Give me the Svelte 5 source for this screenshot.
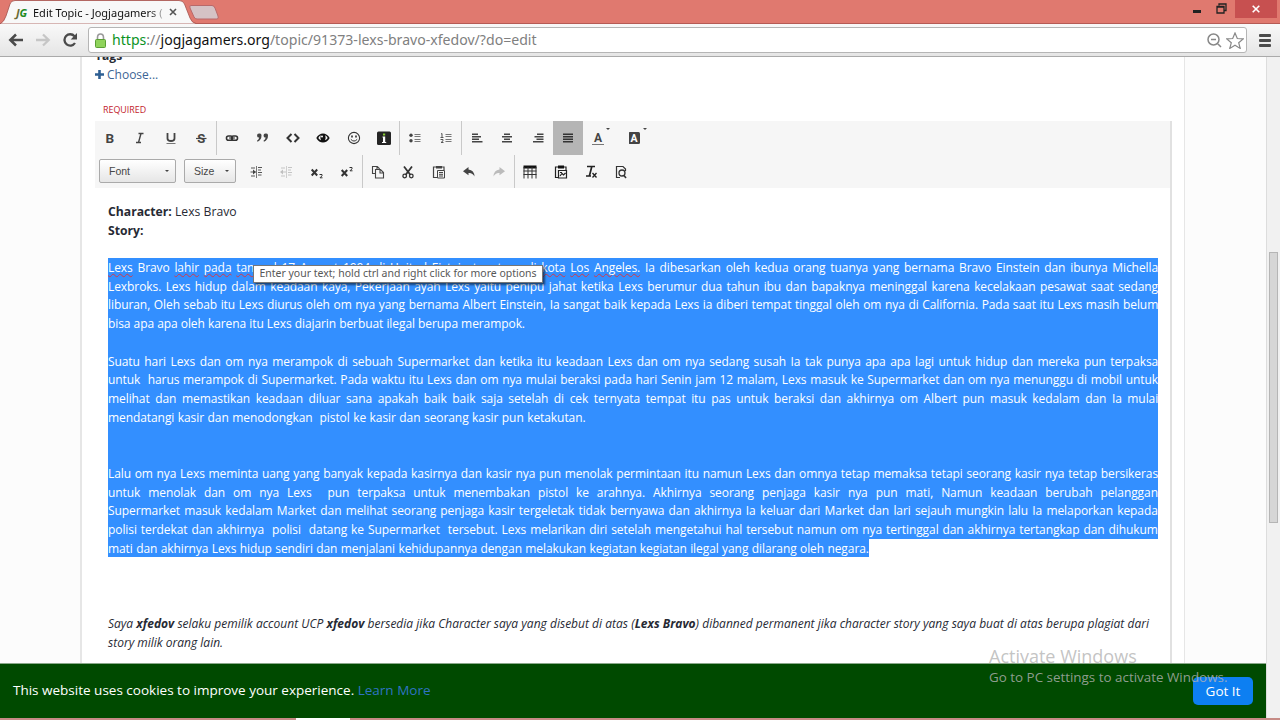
<script>
	const icons = {
		link: '<g fill="none" stroke="#333" stroke-width="1.6"><rect x="2.5" y="6" width="6" height="4.2" rx="2"/><rect x="7.500" y="6" width="6" height="4.2" rx="2"/></g><path d="M5 8h6" stroke="#333"/>',
		quote: '<path d="M4 3.500a2 2 0 0 1 2.500 2Q6.500 10 2.500 11.700l-.5-.9Q4 9.500 4.200 7.600A2 2 0 0 1 4 3.500zM10.500 3.500a2 2 0 0 1 2.500 2Q13 10 9 11.700l-.5-.9q2-1.300 2.200-3.200a2 2 0 0 1-.2-4.100z"/>',
		code: '<path d="M6.500 4 2.500 8l4 4M9.500 4l4 4-4 4" fill="none" stroke="#333" stroke-width="2"/>',
		eye: '<path fill="#111" fill-rule="evenodd" d="M1.300 8C4.500 2 11.500 2 14.700 8 11.500 14 4.500 14 1.300 8zm2 0q1-2 2.500-2.700-1 3 .2 5Q4 9.500 3.300 8zm9.400 0q-1-2-2.500-2.700 1 3-.2 5Q12 9.500 12.700 8z"/><circle cx="7" cy="6.500" r="1" fill="#fff"/>',
		smile: '<circle cx="8" cy="8" r="5.600" fill="none" stroke="#333" stroke-width="1.100"/><ellipse cx="6" cy="6.500" rx=".9" ry="1.200"/><ellipse cx="10" cy="6.500" rx=".9" ry="1.200"/><path d="M4.800 9.300q3.200 3.500 6.400 0" fill="none" stroke="#333"/>',
		info: '<rect x="1" y="1.500" width="14" height="13.500" rx="1.500" fill="#252525"/><path fill="#fff" d="M6.500 6.500h2.700V12h1v1H6v-1h1V7.500h-.5z"/><rect x="7" y="3.500" width="2.200" height="2" fill="#8c3"/>',
		bullets: '<circle cx="4" cy="5.300" r="1.700"/><circle cx="4" cy="10.700" r="1.700"/><path d="M7.500 4.500h6M7.500 6.500h6M7.500 9.500h6M7.500 11.500h6" stroke="#777"/>',
		numbers: '<path d="M3 4l1-.5V7M2.500 7.500h3M2.500 9.500H5v1.300L3 12.500h2.500" fill="none" stroke="#555"/><path d="M7.500 4.500h6M7.500 6.500h6M7.500 9.500h6M7.500 11.500h6" stroke="#777"/>',
		left: '<path d="M3 4.200h6M3 6.700h9M3 9.200h7M3 11.700h10.500" stroke="#444" stroke-width="1.600"/>',
		center: '<path d="M5 4.200h6M3 6.700h10M5 9.200h6M3 11.700h10" stroke="#444" stroke-width="1.600"/>',
		right: '<path d="M7 4.200h6.500M4.500 6.700h9M6.500 9.200h7M3 11.700h10.500" stroke="#444" stroke-width="1.600"/>',
		justify: '<path d="M3 4.200h10M3 6.700h10M3 9.200h10M3 11.700h10" stroke="#333" stroke-width="1.500"/>',
		color: '<text x="4" y="11.800" font-size="12" font-weight="700">A</text><path d="M2 14.500h12" stroke="#777"/>',
		bgcolor: '<rect x="-.5" y="2" width="11.500" height="12" rx="1.500"/><text x="1.500" y="11.800" font-size="10.500" font-weight="700" fill="#fff">A</text>',
		indent: '<path d="M8.500 2v12" stroke="#777"/><path d="M10 3.500h4M10 6h3M10 8.500h4M10 11h3.500M3 4h4M3 12h4M2.500 8h5" stroke="#555" stroke-width="1.200"/><path d="m5 5.500 3 2.500-3 2.500z"/>',
		outdent: '<g opacity=".3"><path d="M8.500 2v12" stroke="#777"/><path d="M10 3.500h4M10 6h3M10 8.500h4M10 11h3.500M3 4h4M3 12h4M3 8h5" stroke="#555" stroke-width="1.200"/><path d="M5 5.500 2 8l3 2.500z"/></g>',
		sub: '<path d="m2.700 5.500 5.500 6M8.200 5.500l-5.500 6" stroke="#333" stroke-width="2"/><path d="M10.500 10.500h2.500v1.300l-2 2h2.500" fill="none" stroke="#333"/>',
		sup: '<path d="m2.700 6 5.500 6M8.200 6l-5.500 6" stroke="#333" stroke-width="2"/><path d="M10.500 3.500h2.500v1.300l-2 2h2.500" fill="none" stroke="#333"/>',
		copy: '<path d="M5 9.500H2.500v-7h4.800l2 2V5M7 2.500v3M5.500 5.500h5l3 3v5.500h-8zM10 6v3h3" fill="none" stroke="#444" stroke-width="1.100"/>',
		cut: '<path d="m4 2.500 6.300 8.200M12 2.500 5.700 10.700" stroke="#333" stroke-width="1.800"/><circle cx="4.700" cy="12" r="1.800" fill="none" stroke="#333" stroke-width="1.300"/><circle cx="11.300" cy="12" r="1.800" fill="none" stroke="#333" stroke-width="1.300"/>',
		paste: '<path d="M6 13.500H2.500V3H5M11 3h2v3" fill="none" stroke="#444" stroke-width="1.200"/><path d="M5 2h6v2.500H5z"/><path d="M6.500 6.500h7v7.500h-7zM8 8.500h4M8 10.300h4M8 12h4" fill="none" stroke="#444"/>',
		undo: '<path d="M7.500 3 2 7.300l5.500 4V9q4-.5 6 3.500Q13.200 6 7.500 5.500z"/>',
		redo: '<path fill="#bbb" d="M8.500 3 14 7.300l-5.500 4V9q-4-.5-6 3.500Q2.800 6 8.500 5.500z"/>',
		table: '<path d="M1.500 1.500h13v3h-13z" fill="#111"/><path d="M2 3v11.500M6 3v11.500M10 3v11.500M14 3v11.500M1.500 7h13M1.500 10.500h13" stroke="#333"/>',
		word: '<path d="M5 13.500H2.500V3H5M11 3h2v3" fill="none" stroke="#222" stroke-width="1.200"/><path d="M5 1.500h6v3H5z" fill="#111"/><path d="M5.500 6.500h8V14h-8zM7 12l2-2.500 1.500 1.500 2-2M7 8.500h2" fill="none" stroke="#222" stroke-width="1.200"/>',
		clear: '<path d="M4 2.500h8M8.800 2.500 6.500 11.500M3 12h5" stroke="#222" stroke-width="1.700"/><path d="m9.500 9 4 4.500M13.500 9l-4 4.500" stroke="#222" stroke-width="1.300"/>',
		preview: '<path d="M7 13.500H3.500v-11H10L12.500 5v2" fill="none" stroke="#333" stroke-width="1.200"/><circle cx="9" cy="9" r="3" fill="none" stroke="#333" stroke-width="1.300"/><path d="m11 11.500 2 2.500" stroke="#333" stroke-width="1.600"/>',
		bold: '<text x="3.500" y="12.800" font-size="13.500" font-weight="700">B</text>',
		italic: '<path d="M6.500 3.500h5M4 12.500h5M9 3.500l-2.500 9" stroke="#444" stroke-width="1.400"/>',
		underline: '<path d="M4.500 3v5.500q0 2.500 3.500 2.500t3.500-2.500V3" fill="none" stroke="#444" stroke-width="1.800"/><path d="M3.500 13.500h9" stroke="#777"/>',
		strike: '<text x="4.300" y="12.800" font-size="13" font-weight="700">S</text><path d="M3 8.500h10.500" stroke="#444" stroke-width="1.200"/>'
	};

	const topGroups = [
		['bold', 'italic', 'underline', 'strike'],
		['link', 'quote', 'code', 'eye', 'smile', 'info'],
		['bullets', 'numbers'],
		['left', 'center', 'right', 'justify', 'color', 'bgcolor']
	];
	const bottomGroups = [
		['indent', 'outdent', 'sub', 'sup'],
		['copy', 'cut', 'paste', 'undo', 'redo'],
		['table', 'word', 'clear', 'preview']
	];

	// "~" marks a word the spell checker underlines
	const story = [
		['~Lexs Bravo ~lahir ~pada ~tanggal 17 August 1994 di United Eistein ~tepatnya di ~kota ~Los ~Angeles. Ia dibesarkan oleh kedua orang tuanya yang bernama Bravo Einstein dan ibunya Michella',
		'Lexbroks. Lexs hidup dalam keadaan kaya, Pekerjaan ayah Lexs yaitu penipu jahat ketika Lexs berumur dua tahun ibu dan bapaknya meninggal karena kecelakaan pesawat saat sedang',
		'liburan, Oleh sebab itu Lexs diurus oleh om nya yang bernama Albert Einstein, Ia sangat baik kepada Lexs ia diberi tempat tinggal oleh om nya di California. Pada saat itu Lexs masih belum',
		'bisa apa apa oleh karena itu Lexs diajarin berbuat ilegal berupa merampok.', ''],
		['Suatu hari Lexs dan om nya merampok di sebuah Supermarket dan ketika itu keadaan Lexs dan om nya sedang susah Ia tak punya apa apa lagi untuk hidup dan mereka pun terpaksa',
		'untuk\u00a0 harus merampok di Supermarket. Pada waktu itu Lexs dan om nya mulai beraksi pada hari Senin jam 12 malam, Lexs masuk ke Supermarket dan om nya menunggu di mobil untuk',
		'melihat dan memastikan keadaan diluar sana apakah baik baik saja setelah di cek ternyata tempat itu pas untuk beraksi dan akhirnya om Albert pun masuk kedalam dan Ia mulai',
		'mendatangi kasir dan menodongkan\u00a0 pistol ke kasir dan seorang kasir pun ketakutan.', '', ''],
		['Lalu om nya Lexs meminta uang yang banyak kepada kasirnya dan kasir nya pun menolak permintaan itu namun Lexs dan omnya tetap memaksa tetapi seorang kasir nya tetap bersikeras',
		'untuk menolak dan om nya Lexs\u00a0 pun terpaksa untuk menembakan pistol ke arahnya. Akhirnya seorang penjaga kasir nya pun mati, Namun keadaan berubah pelanggan',
		'Supermarket masuk kedalam Market dan melihat seorang penjaga kasir tergeletak tidak bernyawa dan akhirnya Ia keluar dari Market dan lari sejauh mungkin lalu Ia melaporkan kepada',
		'polisi terdekat dan akhirnya\u00a0 polisi\u00a0 datang ke Supermarket\u00a0 tersebut. Lexs melarikan diri setelah mengetahui hal tersebut namun om nya tertinggal dan akhirnya tertangkap dan dihukum',
		'mati dan akhirnya Lexs hidup sendiri dan menjalani kehidupannya dengan melakukan kegiatan kegiatan ilegal yang dilarang oleh negara.']
	];

	// width of the lines that end a paragraph
	const ends = [417, 477.5, 761];

	function isLast(para, i) {
		return i == para.length - 1 || (para[i] != '' && para[i + 1] == '');
	}
</script>

{#snippet group(names)}
	<div class="group">
		{#each names as name}
			<button class="tool" class:active={name == 'justify'} class:menu={name == 'color' || name == 'bgcolor'} aria-label={name}>
				<svg viewBox="0 0 16 16">{@html icons[name]}</svg>
			</button>
		{/each}
	</div>
{/snippet}

<main>
	<header>
		<div class="titlebar">
			<div class="tab">
				<svg class="tab-shape" viewBox="0 0 196 24"><path d="M0 24Q4 22 6 16L10 4Q11 .5 15 .5H179Q183 .5 184.500 4L190 18Q192 23 196 23.500V24z" fill="#f8f8f8" stroke="#a4524c" stroke-width=".8"/></svg>
				<i class="fav"><span>J</span>G</i>
				<span class="tab-title">Edit Topic - Jogjagamers (</span>
				<svg class="tab-close" viewBox="0 0 8 8"><path d="m1 1 6 6M7 1 1 7" stroke="#555" stroke-width="1.600"/></svg>
			</div>
			<svg class="newtab" viewBox="0 0 30 15"><path d="M2 .5h21q2 0 3 2.500l3 8q1 3-1 3H8q-2 0-3-2L1 3Q0 .5 2 .5z" fill="#d5c2c5" stroke="#b8696a"/></svg>
			<div class="window">
				<svg class="min" viewBox="0 0 8 3"><path d="M0 1.500h8" stroke="#222" stroke-width="3"/></svg>
				<svg class="max" viewBox="0 0 11 11"><path d="M3 2.500V1h7v6.500H8.500M1 3.500h7V10H1zM1 4h7" fill="none" stroke="#222" stroke-width="1.300"/></svg>
				<div class="close"><svg viewBox="0 0 8 8"><path d="m.7.7 6.600 6.600M7.300.7.7 7.300" stroke="#fff" stroke-width="1.600"/></svg></div>
			</div>
		</div>
		<div class="bar">
			<svg class="nav" viewBox="0 0 16 14"><path d="M15 7H3M8 1.500 2.300 7 8 12.500" fill="none" stroke="#4a4a4a" stroke-width="2.500"/></svg>
			<svg class="nav" viewBox="0 0 16 14"><path d="M1 7h12M8 1.500 13.700 7 8 12.500" fill="none" stroke="#c6c6c6" stroke-width="2.300"/></svg>
			<svg class="nav" viewBox="0 0 16 14"><path d="M12.500 3.200A5.700 5.700 0 1 0 13 10" fill="none" stroke="#4a4a4a" stroke-width="2.300"/><path d="M15 0v6.500H8.700z" fill="#4a4a4a"/></svg>
			<div class="address">
				<svg class="lock" viewBox="0 0 11 15"><path d="M2.500 7V4.500a3 3.500 0 0 1 6 0V7" fill="none" stroke="#999" stroke-width="1.600"/><rect x=".5" y="6.500" width="10" height="8" rx="1" fill="#8fd35b" stroke="#5b9e35"/></svg>
				<span class="url"><b>https</b>://<em>jogjagamers.org</em>/topic/91373-lexs-bravo-xfedov/?do=edit</span>
				<svg class="glass" viewBox="0 0 15 15"><path d="M6.500 1a5.500 5.500 0 1 0 0 11 5.500 5.500 0 0 0 0-11zM4 6.500h5M10.500 10.500l3.500 3.500" fill="none" stroke="#888" stroke-width="1.500"/></svg>
				<svg class="star" viewBox="0 0 18 17"><path d="m9 1 2.300 5.500 5.900.4-4.500 3.800 1.500 5.700L9 13.300l-5.200 3.100 1.500-5.700L.8 6.900l5.900-.4z" fill="#fff" stroke="#888" stroke-width="1.200"/></svg>
			</div>
			<div class="hamburger"></div>
		</div>
	</header>

	<div class="view">
		<div class="page">
			<div class="sheet">
				<div class="tags">Tags</div>
				<div class="choose"><svg viewBox="0 0 9 9"><path d="M4.500 0v9M0 4.500h9" stroke="#2e5f93" stroke-width="2.600"/></svg>Choose...</div>
				<div class="required">REQUIRED</div>
				<div class="editor">
					<div class="toolbar">
						<div class="row">
							{#each topGroups as names}{@render group(names)}{/each}
						</div>
						<div class="row second">
							<div class="select font">Font<span></span></div>
							<div class="select size">Size<span></span></div>
							{#each bottomGroups as names}{@render group(names)}{/each}
						</div>
					</div>
					<div class="content">
						<p><strong>Character:</strong> Lexs Bravo</p>
						<p><strong>Story:</strong></p>
						<div class="selection">
							{#each story as para, n}
								{#each para as line, i}
									<div class="line" class:end={n == 2 && isLast(para, i)}>
										{#if line}
											<div class="words" style:width={isLast(para, i) ? ends[n] + 'px' : null}>
												{#each line.split(' ') as word, w}{w ? ' ' : ''}{#if word[0] == '~'}<u>{word.slice(1)}</u>{:else}{word}{/if}{/each}
											</div>
										{/if}
									</div>
								{/each}
							{/each}
							<div class="tooltip">Enter your text; hold ctrl and right click for more options</div>
						</div>
						<div class="oath">
							<div class="words" style:width="1041px">Saya <strong>xfedov</strong> selaku pemilik account UCP <strong>xfedov</strong> bersedia jika Character saya yang disebut di atas (<strong>Lexs Bravo</strong>) dibanned permanent jika character story yang saya buat di atas berupa plagiat dari</div>
							<div class="words" style:width="113px">story milik orang lain.</div>
						</div>
					</div>
				</div>
			</div>
			<div class="cookies">
				<span>This website uses cookies to improve your experience. <a href="#more">Learn More</a></span>
				<button>Got It</button>
			</div>
		</div>
		<div class="scroll"><div class="thumb"></div></div>
	</div>
	<footer><div></div></footer>

	<div class="activate">
		<div>Activate Windows</div>
		<p>Go to PC settings to activate Windows.</p>
	</div>
</main>

<style>
	:global(body) {
		margin: 0;
		overflow: hidden;
	}
	main {
		position: relative;
		display: flex;
		flex-direction: column;
		width: 1280px;
		height: 720px;
		overflow: hidden;
		background: #fff;
		color: #272a34;
		font-family: "Open Sans", "Noto Sans", sans-serif;
		font-size: 12.1px;
	}
	svg {
		display: block;
		flex: none;
	}
	p {
		margin: 0;
	}
	.titlebar {
		display: flex;
		height: 23px;
		background: #e0796f;
		border-bottom: 1px solid #b55b55;
	}
	.tab {
		position: relative;
		display: flex;
		align-items: center;
		width: 192px;
		height: 24px;
		font-family: "Noto Sans", sans-serif;
		font-size: 11px;
		color: #111;
	}
	.tab-shape {
		position: absolute;
		left: 0;
		top: 0;
		width: 196px;
		height: 24px;
	}
	.fav {
		position: relative;
		margin-left: 16px;
		width: 17px;
		font-size: 11px;
		font-weight: 700;
		letter-spacing: -0.2px;
		color: #218a21;
	}
	.fav span {
		color: #6b6b35;
	}
	.tab-title {
		position: relative;
		width: 130px;
		overflow: hidden;
		white-space: nowrap;
		mask-image: linear-gradient(to right, #000 116px, #0003 132px);
	}
	.tab-close {
		position: relative;
		width: 8px;
		height: 8px;
		margin-left: 6px;
	}
	.newtab {
		width: 30px;
		height: 15px;
		margin: 5px 0 0 -3px;
	}
	.window {
		display: flex;
		margin-left: auto;
	}
	.min {
		width: 8px;
		height: 3px;
		margin: 10px 15px 0 0;
	}
	.max {
		width: 11px;
		height: 11px;
		margin: 3px 8px 0 0;
	}
	.close {
		display: flex;
		align-items: center;
		justify-content: center;
		width: 42px;
		height: 18px;
		margin-right: 3px;
		background: #c75050;
	}
	.close svg {
		width: 8px;
		height: 8px;
	}
	.bar {
		display: flex;
		align-items: center;
		height: 32px;
		border-bottom: 1px solid #aaa;
		background: linear-gradient(#f9f9f9, #e5e5e5);
	}
	.nav {
		width: 16px;
		height: 14px;
		margin-left: 8px;
		margin-right: 3px;
	}
	.address {
		display: flex;
		align-items: center;
		box-sizing: border-box;
		width: 1159px;
		height: 26px;
		margin-left: 7px;
		padding: 0 2px 0 6px;
		border: 1px solid #b5b5b5;
		border-radius: 3px;
		background: #fff;
	}
	.lock {
		width: 11px;
		height: 15px;
	}
	.url {
		margin-left: 6px;
		flex: 1;
		color: #808080;
		font-size: 14.1px;
		line-height: 20px;
		padding-bottom: 1px;
		font-family: "Noto Sans", sans-serif;
	}
	.url b {
		font-weight: 400;
		color: #0a931f;
	}
	.url em {
		font-style: normal;
		color: #111;
	}
	.glass {
		width: 15px;
		height: 15px;
		margin-right: 4px;
	}
	.star {
		width: 18px;
		height: 17px;
	}
	.hamburger {
		width: 12px;
		height: 3px;
		margin-left: 12px;
		border-radius: 1px;
		background: #4b4b4b;
		box-shadow: 0 -5px #4b4b4b, 0 5px #4b4b4b;
	}
	.view {
		display: flex;
		height: 661px;
	}
	.page {
		display: flex;
		flex-direction: column;
		width: 1266px;
		background: #fcfcfc;
	}
	.sheet {
		box-sizing: border-box;
		width: 1105px;
		height: 606px;
		margin-left: 80px;
		padding: 0 13px;
		overflow: hidden;
		border: solid #e6e6e6;
		border-width: 0 1px 0 2px;
		background: #fff;
	}
	.tags {
		height: 8px;
		line-height: 17px;
		margin-top: -10px;
		padding-bottom: 10px;
		font-weight: 700;
	}
	.choose {
		display: flex;
		align-items: center;
		height: 18px;
		color: #3d6594;
		font-size: 12px;
	}
	.choose svg {
		width: 9px;
		height: 9px;
		margin-right: 3px;
	}
	.required {
		margin: 19px 0 0 8px;
		height: 19px;
		line-height: 16px;
		font-size: 8.9px;
		color: #c3212b;
	}
	.editor {
		box-sizing: border-box;
		width: 1077px;
		height: 600px;
		border-right: 2px solid #e1e1e1;
	}
	.toolbar {
		height: 67px;
		background: #f6f6f6;
	}
	.row {
		display: flex;
		height: 33.5px;
	}
	.group {
		display: flex;
		border-right: 1px solid #c9c9c9;
	}
	.group:last-child {
		border: 0;
	}
	.tool {
		display: flex;
		align-items: center;
		justify-content: center;
		position: relative;
		width: 30.34px;
		height: 100%;
		padding: 0;
		border: 0;
		background: none;
	}
	.second .tool {
		width: 30.25px;
		padding-top: 1px;
	}
	.tool svg {
		width: 16px;
		height: 16px;
		fill: #444;
		font-family: Roboto, sans-serif;
	}
	.tool.active {
		background: #b5b5b5;
	}
	.tool.menu::after {
		content: '';
		position: absolute;
		right: 4px;
		top: 7px;
		border: 2px solid transparent;
		border-top-color: #444;
	}
	.tool.menu:last-child {
		width: 46px;
	}
	.tool.menu:last-child::after {
		right: 13px;
	}
	.select {
		display: flex;
		align-items: center;
		justify-content: space-between;
		box-sizing: border-box;
		height: 24px;
		margin: 4px 0 0 4px;
		padding: 0 6px 0 9px;
		border: 1px solid #aaa;
		border-radius: 2px;
		background: linear-gradient(#fff, #e6e6e6);
		color: #474747;
		font-family: "Liberation Sans", sans-serif;
		font-size: 10.5px;
	}
	.select span {
		border: 2px solid transparent;
		border-top-color: #444;
		margin-top: 2px;
	}
	.font {
		width: 77px;
	}
	.size {
		width: 52px;
		margin: 4px 5px 0 8px;
	}
	.content {
		padding: 15px 12px 0 13px;
		font-size: 12.2px;
		line-height: 18.72px;
	}
	.selection {
		position: relative;
		margin-top: 17.500px;
		color: #fff;
		font-size: 12px;
		letter-spacing: -0.08px;
	}
	.line {
		box-sizing: border-box;
		height: 18.72px;
		padding-top: 1px;
		background: #338fff;
	}
	.line.end {
		width: 761px;
	}
	.words {
		text-align: justify;
		text-align-last: justify;
		white-space: nowrap;
	}
	u {
		text-decoration: underline wavy #d33a4a 1px;
		text-underline-offset: 1px;
		text-decoration-skip-ink: none;
	}
	.tooltip {
		position: absolute;
		left: 145px;
		top: 7px;
		box-sizing: border-box;
		width: 290px;
		height: 18px;
		border: 1px solid #767676;
		background: #fff;
		box-shadow: 2px 2px 2px #0008;
		color: #575757;
		font-family: "Noto Sans", sans-serif;
		font-size: 10.5px;
		letter-spacing: 0;
		line-height: 15px;
		text-align: center;
		white-space: nowrap;
	}
	.oath {
		margin-top: 58px;
		font-size: 12px;
		font-style: italic;
	}
	.cookies {
		display: flex;
		align-items: center;
		justify-content: space-between;
		box-sizing: border-box;
		height: 55px;
		padding: 0 13px 1px;
		border-top: 1px solid #8aa88a;
		background: #004a00;
		color: #fff;
		font-size: 13.5px;
	}
	.cookies span {
		padding-bottom: 1px;
	}
	.cookies a {
		color: #2f74c4;
		text-decoration: none;
	}
	.cookies button {
		width: 60px;
		height: 28px;
		padding: 0;
		border: 0;
		border-radius: 5px;
		background: #0d7ff2;
		color: #fff;
		font: inherit;
	}
	.scroll {
		width: 14px;
		box-sizing: border-box;
		padding-left: 2px;
		border-left: 1px solid #ddd;
		background: #f1f1f1;
	}
	.thumb {
		box-sizing: border-box;
		width: 9px;
		height: 271px;
		margin-top: 195px;
		border: 1px solid #b5b5b5;
		background: #d6d6d6;
	}
	footer {
		height: 2px;
		background: #c68b86;
	}
	footer div {
		width: 54px;
		height: 2px;
		margin-left: 296px;
		background: #fff;
	}
	.activate {
		position: absolute;
		left: 989px;
		top: 644px;
		color: #b4b4b4cc;
		font-size: 18px;
		line-height: 24px;
		white-space: nowrap;
	}
	.activate p {
		font-size: 13.400px;
		line-height: 18px;
	}
</style>
